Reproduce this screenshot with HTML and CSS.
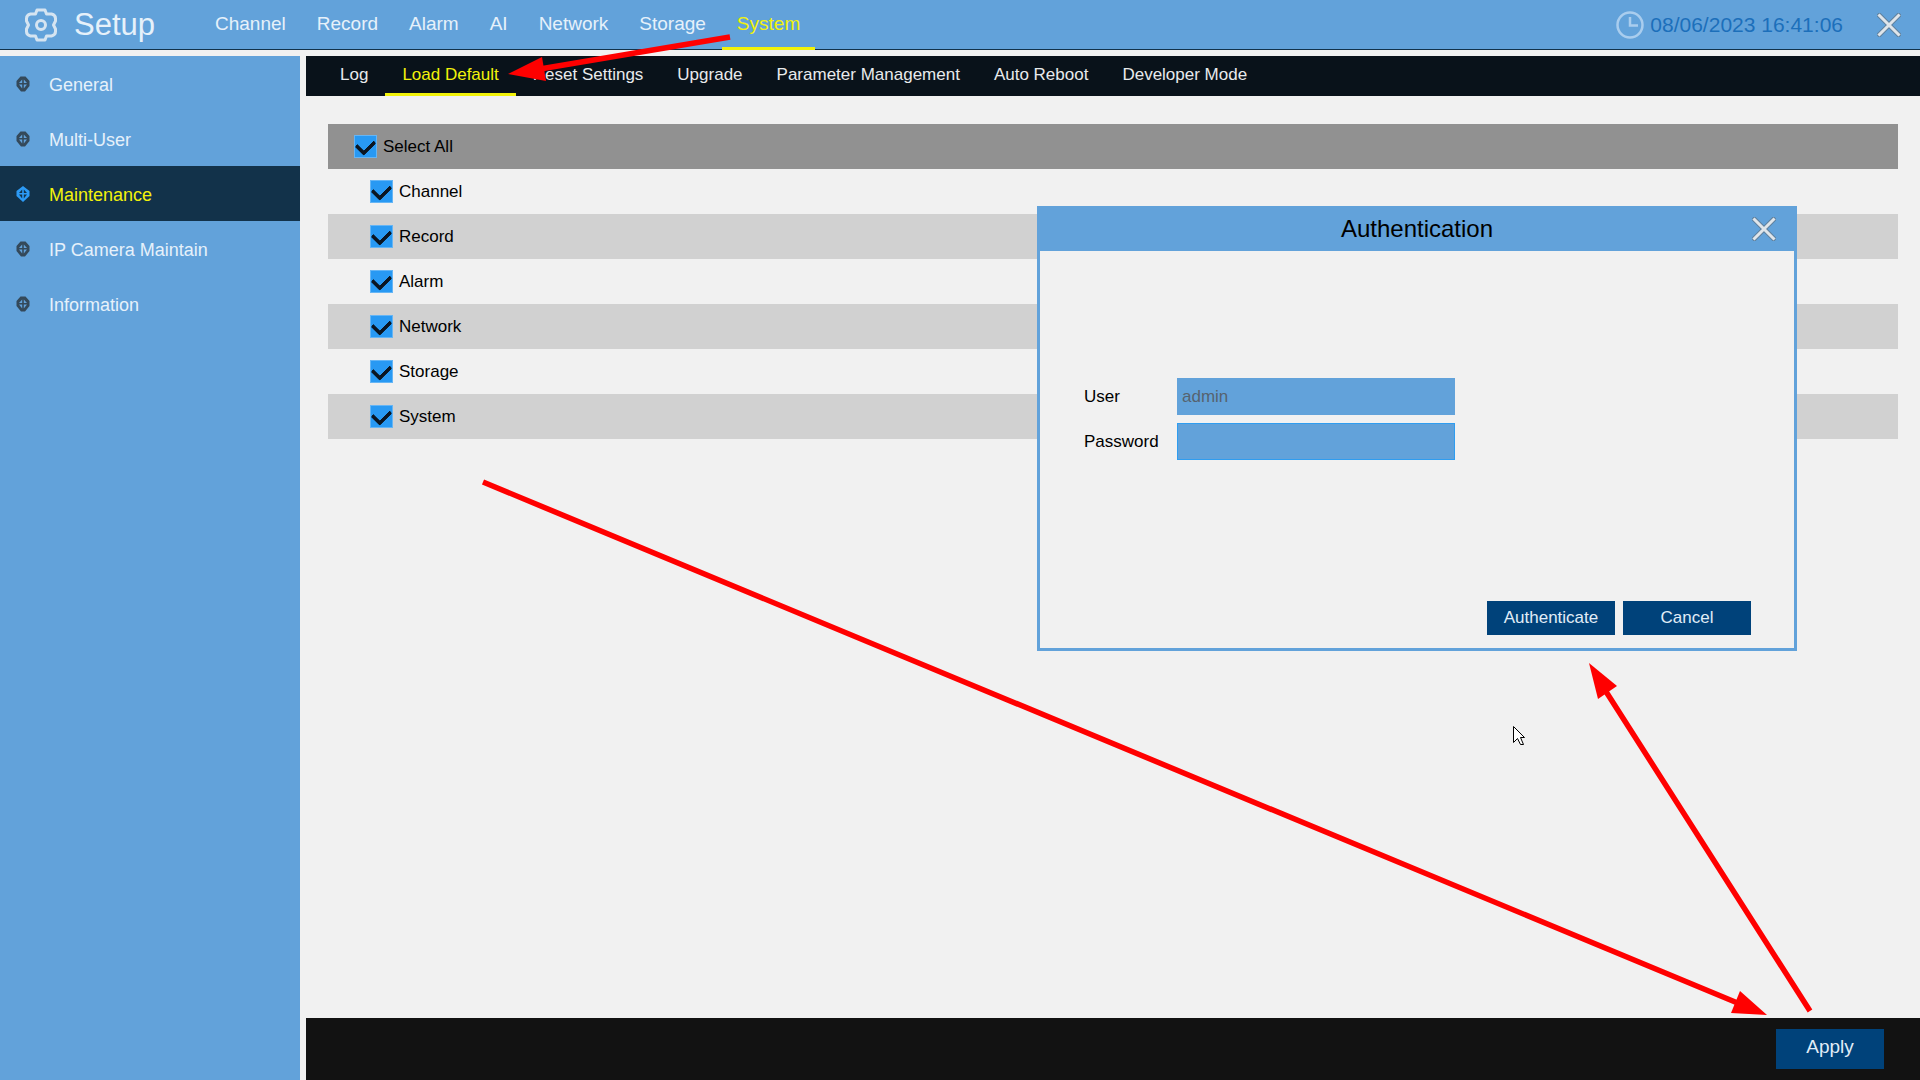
FILE: index.html
```
<!DOCTYPE html>
<html lang="en">
<head>
  <meta charset="UTF-8" />
  <meta name="viewport" content="width=device-width, initial-scale=1.0"/>
  <title>Setup</title>
  <link rel="stylesheet" href="styles.css">
</head>
<body>
  <!-- shared icons -->
  <svg class="defs" width="0" height="0" aria-hidden="true">
    <symbol id="gem" viewBox="0 0 14 16">
      <path fill="currentColor" fill-rule="evenodd" d="M4.500 .5h5L13.500 5v5L9 15.500H5L.5 10V5zM6.200 3.500L3 7h3.200zM7.800 3.500V7H11zM3 8.600l3.200 4V8.600zM7.800 8.600v4l3.200-4z"/>
    </symbol>
    <symbol id="gem-on" viewBox="0 0 14 16">
      <path fill="currentColor" fill-rule="evenodd" d="M7 0l6.500 5v5L7 16 .5 10V5zM6.200 3.500L3 7h3.200zM7.800 3.500V7H11zM3 8.600l3.200 4V8.600zM7.800 8.600v4l3.200-4z"/>
    </symbol>
    <symbol id="cross" viewBox="0 0 24 24">
      <path d="M2.500 2.500l19 19M21.500 2.500l-19 19" stroke="#5f819e" stroke-width="5" stroke-linecap="square"/>
      <path d="M2.500 2.500l19 19M21.500 2.500l-19 19" stroke="#dfe5ea" stroke-width="3" stroke-linecap="square"/>
    </symbol>
  </svg>

  <header class="topbar">
    <svg class="gear" viewBox="0 0 34 34" fill="none" stroke="#d5e4f1" stroke-linejoin="round" aria-hidden="true">
      <path stroke-width="3" d="M13 2h8l1.500 4h5q4 1 4 4.500v2.500l-2 4 2 4v2.500q0 3.500-4 4.500h-5l-1.500 4h-8l-1.500-4h-5q-4-1-4-4.500v-2.500l2-4-2-4v-2.500q0-3.500 4-4.500h5z"/>
      <circle cx="17" cy="17" r="4.500" stroke-width="3"/>
    </svg>
    <h1>Setup</h1>
    <nav class="tabs">
      <a href="#">Channel</a>
      <a href="#">Record</a>
      <a href="#">Alarm</a>
      <a href="#">AI</a>
      <a href="#">Network</a>
      <a href="#">Storage</a>
      <a href="#" class="active">System</a>
    </nav>
    <svg class="clock" viewBox="0 0 28 28" fill="none" stroke="#a9cdee" aria-hidden="true">
      <circle cx="14" cy="14" r="12.500" stroke-width="2.500"/>
      <path stroke-width="2.500" d="M14 6v8.500h8"/>
    </svg>
    <time>08/06/2023 16:41:06</time>
    <button class="close" aria-label="Close"><svg><use href="#cross"/></svg></button>
  </header>

  <div class="layout">
    <nav class="sidebar">
      <a href="#"><svg><use href="#gem"/></svg>General</a>
      <a href="#"><svg><use href="#gem"/></svg>Multi-User</a>
      <a href="#" class="active"><svg><use href="#gem-on"/></svg>Maintenance</a>
      <a href="#"><svg><use href="#gem"/></svg>IP Camera Maintain</a>
      <a href="#"><svg><use href="#gem"/></svg>Information</a>
    </nav>

    <main>
      <nav class="subtabs">
        <a href="#">Log</a>
        <a href="#" class="active">Load Default</a>
        <a href="#">Reset Settings</a>
        <a href="#">Upgrade</a>
        <a href="#">Parameter Management</a>
        <a href="#">Auto Reboot</a>
        <a href="#">Developer Mode</a>
      </nav>

      <div class="options">
        <label class="all"><input type="checkbox" checked>Select All</label>
        <label><input type="checkbox" checked>Channel</label>
        <label><input type="checkbox" checked>Record</label>
        <label><input type="checkbox" checked>Alarm</label>
        <label><input type="checkbox" checked>Network</label>
        <label><input type="checkbox" checked>Storage</label>
        <label><input type="checkbox" checked>System</label>
      </div>

      <footer>
        <button class="btn apply">Apply</button>
      </footer>
    </main>
  </div>

  <div class="dialog" role="dialog" aria-labelledby="dialogTitle">
    <div class="dialog-head">
      <h2 id="dialogTitle">Authentication</h2>
      <button class="close" aria-label="Close dialog"><svg><use href="#cross"/></svg></button>
    </div>
    <form class="dialog-body">
      <div class="field">
        <label for="user">User</label>
        <input type="text" id="user" value="admin" disabled>
      </div>
      <div class="field">
        <label for="password">Password</label>
        <input type="password" id="password" class="focused">
      </div>
      <div class="actions">
        <button type="button" class="btn">Authenticate</button>
        <button type="button" class="btn">Cancel</button>
      </div>
    </form>
  </div>

  <!-- step arrows and mouse pointer -->
  <svg class="overlay" viewBox="0 0 1920 1080" aria-hidden="true">
    <g stroke="#f00" stroke-width="5.500">
      <path d="M730 37L540 69M483 482L1740 1004M1810 1011L1605 690"/>
    </g>
    <g fill="#f00">
      <path d="M508 74L542 57L546 81z"/>
      <path d="M1767 1015L1740 991L1731 1013z"/>
      <path d="M1589 663L1617 686L1598 699z"/>
    </g>
    <path d="M1513.500 726.500v16l4-4 3 6h3l-3-7h4z" fill="#fff" stroke="#000"/>
  </svg>
</body>
</html>
```

FILE: styles.css
```
* {
  box-sizing: border-box;
}
body {
  font-family: "Liberation Sans", Arial, sans-serif;
  font-size: 17px;
  background: #f1f1f1;
  color: #000;
  margin: 0;
  min-height: 100vh;
  display: flex;
  flex-direction: column;
  gap: 6px;
  position: relative;
}
a {
  color: inherit;
  text-decoration: none;
}
h1, h2 {
  margin: 0;
  font-weight: normal;
}
button {
  font: inherit;
  border: 0;
  padding: 0;
  cursor: pointer;
}
.defs {
  position: absolute;
}
.close {
  background: none;
  width: 24px;
  height: 24px;
}
.close svg {
  display: block;
  width: 24px;
  height: 24px;
}

/* top bar */
.topbar {
  height: 50px;
  display: flex;
  align-items: center;
  padding: 0 19px 0 24px;
  background: #62a2da;
  border-bottom: 1px solid #12324a;
  color: #e6f1fa;
}
.gear {
  width: 34px;
  height: 34px;
  margin-right: 16px;
}
.topbar h1 {
  font-size: 31px;
  margin-right: 45px;
}
.tabs {
  display: flex;
  gap: 1px;
  flex: 1;
  align-self: stretch;
  margin-bottom: -1px;
  font-size: 19px;
}
.tabs a {
  display: flex;
  align-items: center;
  padding: 0 15px;
  border-bottom: 3px solid transparent;
}
.tabs a.active, .subtabs a.active {
  color: #f2f20a;
  border-color: #f2f20a;
}
.clock {
  width: 28px;
  height: 28px;
  margin-right: 6px;
}
.topbar time {
  font-size: 21px;
  color: #1c6fba;
  margin-right: 34px;
}

.layout {
  flex: 1;
  display: flex;
  gap: 6px;
}

/* left menu */
.sidebar {
  width: 300px;
  background: #62a2da;
  color: #e6f1fa;
  font-size: 18px;
}
.sidebar a {
  display: flex;
  align-items: center;
  gap: 19px;
  height: 55px;
  padding: 4px 0 0 16px;
}
.sidebar svg {
  width: 14px;
  height: 16px;
  margin-bottom: 4px;
  color: #34495a;
}
.sidebar a.active {
  background: #12324a;
  color: #f2f20a;
}
.sidebar a.active svg {
  color: #2c9af5;
}

main {
  flex: 1;
  display: flex;
  flex-direction: column;
}
.subtabs {
  display: flex;
  height: 40px;
  padding-left: 17px;
  background: #09121a;
  color: #e8eaec;
}
.subtabs a {
  display: flex;
  align-items: center;
  padding: 0 17px;
  border-bottom: 3px solid transparent;
}

/* option rows */
.options {
  flex: 1;
  padding: 28px 22px;
}
.options label {
  display: flex;
  align-items: center;
  gap: 6px;
  height: 45px;
  padding-left: 42px;
}
.options label:nth-child(odd) {
  background: #d1d1d1;
}
.options label.all {
  background: #919191;
  padding-left: 26px;
}
.options input {
  appearance: none;
  display: grid;
  place-items: center;
  width: 23px;
  height: 23px;
  margin: 0;
  background: #2899f3;
  border: 1px solid #65b5f5;
}
.options input:checked::after {
  content: "";
  width: 9px;
  height: 14px;
  border: solid #0b1622;
  border-width: 0 4px 4px 0;
  border-radius: 2px;
  transform: translateY(-2px) rotate(45deg);
}

footer {
  display: flex;
  justify-content: flex-end;
  align-items: center;
  height: 62px;
  padding-right: 36px;
  background: #121212;
}
.btn {
  width: 128px;
  height: 34px;
  background: #00427a;
  color: #e0edf7;
}
.apply {
  width: 108px;
  height: 40px;
  padding-bottom: 4px;
  font-size: 19px;
}

/* login dialog */
.dialog {
  position: absolute;
  top: 206px;
  right: 123px;
  width: 760px;
  background: #f1f1f1;
  border: 3px solid #62a2da;
}
.dialog-head {
  display: grid;
  grid-template-columns: 24px 1fr 24px;
  align-items: center;
  height: 42px;
  padding: 0 18px 2px;
  background: #62a2da;
}
.dialog-head h2 {
  grid-column: 2;
  font-size: 24px;
  text-align: center;
}
.dialog-body {
  padding: 127px 43px 13px 44px;
}
.field {
  display: flex;
  align-items: center;
  margin-bottom: 8px;
}
.field label {
  width: 93px;
}
.field input {
  width: 278px;
  height: 37px;
  padding: 0 4px;
  font: inherit;
  color: #56636f;
  background: #62a2da;
  border: 1px solid #62a2da;
  border-radius: 0;
}
.field input.focused {
  border-color: #2f9df0;
}
.actions {
  display: flex;
  justify-content: flex-end;
  gap: 8px;
  margin-top: 141px;
}

.overlay {
  position: absolute;
  top: 0;
  left: 0;
  width: 100%;
  height: 100%;
  pointer-events: none;
}
```
